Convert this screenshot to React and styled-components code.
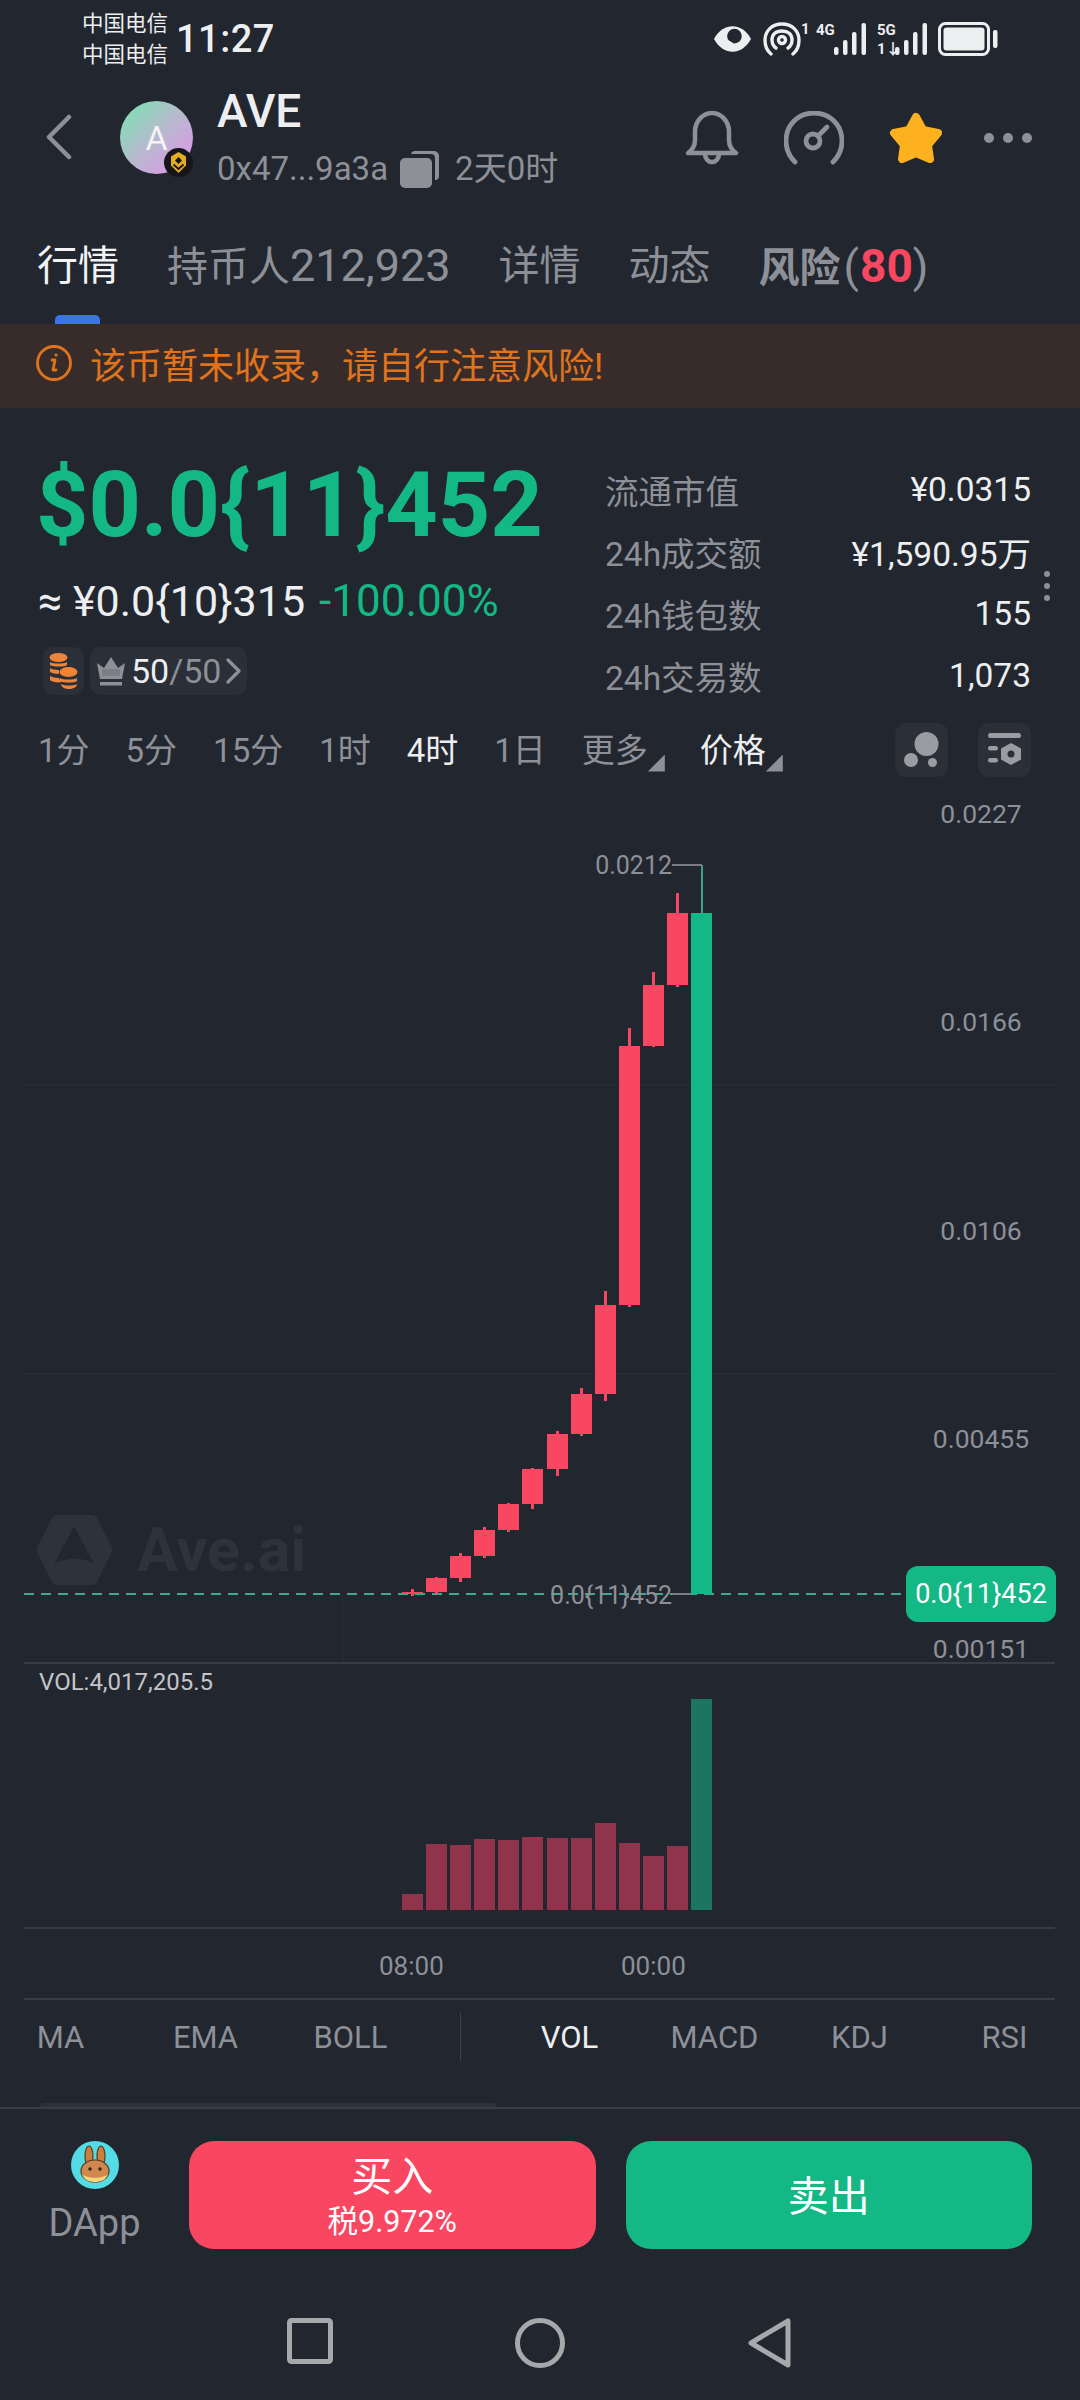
import React from 'react'
import styled, { createGlobalStyle } from 'styled-components'

const BG = '#22262e'
const GREEN = '#14b885'
const RED = '#f94661'
const GRAY = '#8d9097'
const WHITE = '#eceef0'
const CHIP = '#2a2f38'
const RULE = '#383c44'

const GlobalStyle = createGlobalStyle`
  html, body {
    margin: 0;
    padding: 0;
    background: ${BG};
  }
  body {
    font-family: Roboto, "Noto Sans CJK SC", sans-serif;
    color: ${WHITE};
  }
  * {
    box-sizing: border-box;
  }
`

const Page = styled.div`
  width: 1080px;
  height: 2400px;
  overflow: hidden;
  background: ${BG};
`

const IconSlot = styled.span`
  display: flex;
  flex: none;
  margin-left: ${({ $ml }) => $ml || 0}px;
  margin-right: ${({ $mr }) => $mr || 0}px;
`

/* status bar */
const StatusBar = styled.div`
  height: 76px;
  padding: 2px 82px 0 82px;
  display: flex;
  align-items: center;
`
const Carriers = styled.div`
  display: flex;
  flex-direction: column;
  font-size: 21.500px;
  line-height: 31px;
  width: 94px;
`
const Clock = styled.div`
  font-size: 38px;
  font-weight: 500;
  line-height: 44px;
  letter-spacing: 0.500px;
`
const StatusIcons = styled.div`
  margin-left: auto;
  display: flex;
  align-items: center;
`
const NetWrap = styled.div`
  position: relative;
  width: ${({ $w }) => $w}px;
  height: 34px;
  margin-left: ${({ $ml }) => $ml || 0}px;
  font-size: 15px;
  font-weight: 700;
  line-height: 15px;
`
const NetText = styled.span`
  position: absolute;
  left: ${({ $left }) => $left || 0}px;
  top: ${({ $top }) => $top || 0}px;
`

/* header */
const Header = styled.div`
  height: 124px;
  padding: 0 48px 0 46px;
  display: flex;
  align-items: flex-start;
`
const BackButton = styled.div`
  width: 74px;
  padding-top: 38px;
  display: flex;
`
const Avatar = styled.div`
  position: relative;
  width: 73px;
  height: 73px;
  margin-top: 25px;
  border-radius: 50%;
  background: linear-gradient(135deg, #74e6ac 0%, #b7b9cf 50%, #e790ec 100%);
  display: flex;
  align-items: center;
  justify-content: center;
  font-size: 34px;
  color: #f4f4f6;
`
const ChainBadge = styled.div`
  position: absolute;
  right: 0;
  bottom: 0;
  width: 29px;
  height: 29px;
`
const TokenInfo = styled.div`
  margin-left: 24px;
  display: flex;
  flex-direction: column;
`
const TokenName = styled.div`
  font-size: 46px;
  font-weight: 500;
  line-height: 56px;
  margin-top: 7px;
`
const TokenMeta = styled.div`
  display: flex;
  align-items: center;
  font-size: 33px;
  line-height: 44px;
  margin-top: 8px;
  color: ${GRAY};
`
const HeaderIcons = styled.div`
  margin-left: auto;
  padding-top: 35px;
  display: flex;
  align-items: center;
`

/* tabs */
const Tabs = styled.div`
  height: 124px;
  padding: 38px 0 0 37px;
  display: flex;
  gap: 48px;
  align-items: flex-start;
`
const Tab = styled.div`
  position: relative;
  font-size: 41px;
  line-height: 56px;
  color: ${({ $active }) => ($active ? '#f2f3f5' : GRAY)};
  font-weight: ${({ $strong }) => ($strong ? 700 : 400)};
  white-space: nowrap;

  ${({ $active }) =>
    $active &&
    `&:after {
      content: '';
      position: absolute;
      left: 18px;
      top: 77px;
      width: 45px;
      height: 9px;
      border-radius: 5px 5px 0 0;
      background: #3b74ea;
    }`}
`
const TabNumber = styled.span`
  font-size: 45px;
  font-weight: 400;
`
const RiskParen = styled.span`
  font-size: 45px;
  font-weight: 400;
  margin: 0 1px 0 3px;
`
const RiskScore = styled.span`
  font-size: 46px;
  color: ${RED};
  font-weight: 700;
`

const Banner = styled.div`
  height: 84px;
  padding: 0 0 7px 36px;
  background: #382c2b;
  display: flex;
  align-items: center;
  gap: 18px;
  font-size: 36px;
  color: #e0741c;
`

/* price + stats */
const Market = styled.div`
  height: 308px;
  position: relative;
  padding: 50px 49px 0 36px;
  display: flex;
  justify-content: space-between;
`
const PriceCol = styled.div`
  display: flex;
  flex-direction: column;
`
const Price = styled.div`
  font-size: 91.500px;
  font-weight: 700;
  line-height: 86px;
  margin-top: 4px;
  color: ${GREEN};
  white-space: nowrap;
`
const Quote = styled.div`
  margin: 28px 0 0 2px;
  font-size: 43px;
  line-height: 50px;
  white-space: nowrap;
`
const Change = styled.span`
  color: ${GREEN};
  margin-left: 14px;
  font-size: 44px;
`
const ChipRow = styled.div`
  margin-top: 21px;
  margin-left: 7px;
  display: flex;
  gap: 6px;
`
const Chip = styled.div`
  height: 48px;
  padding: 0 6px;
  border-radius: 10px;
  background: ${CHIP};
  display: flex;
  align-items: center;
  gap: 5px;
  font-size: 34px;
  line-height: 48px;
`
const ChipMuted = styled.span`
  color: ${GRAY};
`
const Stats = styled.div`
  width: 426px;
  display: flex;
  flex-direction: column;
`
const StatRow = styled.div`
  height: 62px;
  display: flex;
  justify-content: space-between;
  align-items: center;
  font-size: 33.500px;
`
const StatLabel = styled.span`
  color: ${GRAY};
`
const MoreDots = styled.div`
  position: absolute;
  right: 30px;
  top: 163px;
  display: flex;
  flex-direction: column;
  gap: 6px;
`
const MoreDot = styled.span`
  width: 6px;
  height: 6px;
  border-radius: 50%;
  background: ${GRAY};
`

/* interval bar */
const TimeBar = styled.div`
  height: 68px;
  padding: 0 49px 0 38px;
  display: flex;
  align-items: center;
  gap: 36px;
  font-size: 33px;
  color: ${GRAY};
`
const Interval = styled.span`
  color: ${({ $active }) => ($active ? WHITE : GRAY)};
  white-space: nowrap;
  margin-top: -5px;
`
const Drop = styled.span`
  display: inline-flex;
  align-items: flex-end;
  height: 48px;
  margin: -5px -1px 0 0;
  color: ${({ $active }) => ($active ? WHITE : GRAY)};
  white-space: nowrap;

  &:after {
    content: '';
    width: 17px;
    height: 17px;
    margin-bottom: 0;
    background: ${GRAY};
    clip-path: polygon(100% 0, 100% 100%, 0 100%);
  }
`
const ToolGroup = styled.div`
  margin-left: auto;
  display: flex;
  gap: 30px;
`
const ToolButton = styled.div`
  width: 53px;
  height: 54px;
  border-radius: 11px;
  background: ${CHIP};
  display: flex;
  align-items: center;
  justify-content: center;
`

/* chart */
const PricePane = styled.div`
  position: relative;
  height: 878px;
`
const ChartSvg = styled.svg`
  display: block;
`
const AxisLabel = styled.div`
  position: absolute;
  left: 906px;
  width: 150px;
  top: ${({ $y }) => $y}px;
  transform: translateY(-50%);
  text-align: center;
  font-size: 26.500px;
  color: ${GRAY};
`
const PriceTag = styled.div`
  position: absolute;
  left: 906px;
  top: 782px;
  width: 150px;
  height: 56px;
  border-radius: 12px;
  background: ${GREEN};
  display: flex;
  align-items: center;
  justify-content: center;
  color: #fff;
  font-size: 27px;
`
const PointLabel = styled.div`
  position: absolute;
  right: ${({ $right }) => $right}px;
  top: ${({ $y }) => $y}px;
  transform: translateY(-50%);
  font-size: ${({ $size }) => $size}px;
  color: ${GRAY};
  white-space: nowrap;
`
const Watermark = styled.div`
  position: absolute;
  left: 36px;
  top: 730px;
  display: flex;
  align-items: center;
  gap: 24px;
  color: #2d323b;
  font-size: 61px;
  font-weight: 700;
`
const Rule = styled.div`
  height: 2px;
  margin: 0 25px 0 24px;
  background: ${RULE};
`
const VolumePane = styled.div`
  position: relative;
  height: 263px;
`
const VolumeLabel = styled.div`
  position: absolute;
  left: 39px;
  top: 4px;
  font-size: 24px;
  line-height: 28px;
  color: #c3c5c9;
`
const TimeAxis = styled.div`
  position: relative;
  height: 69px;
`
const TimeLabel = styled.span`
  position: absolute;
  left: ${({ $x }) => $x}px;
  top: 21px;
  font-size: 26px;
  line-height: 32px;
  color: ${GRAY};
`

/* indicators */
const Indicators = styled.div`
  position: relative;
  height: 107px;
  margin-left: -12px;
  display: grid;
  grid-template-columns: 145px 145px 145px 74px 145px 145px 145px 145px;
  grid-template-rows: 74px;
  align-items: center;
  justify-items: center;
  font-size: 31px;
  color: ${GRAY};
`
const Indicator = styled.span`
  color: ${({ $active }) => ($active ? WHITE : GRAY)};
`
const IndicatorSplit = styled.span`
  width: 1px;
  height: 48px;
  background: #3d4149;
`
const Handle = styled.div`
  position: absolute;
  left: 52px;
  bottom: 0;
  width: 457px;
  height: 4px;
  border-radius: 4px 4px 0 0;
  background: #2d3139;
`
const FullRule = styled.div`
  height: 2px;
  background: ${RULE};
`

/* bottom actions */
const ActionBar = styled.div`
  height: 181px;
  padding: 32px 48px 0 47px;
  display: flex;
  align-items: flex-start;
`
const DApp = styled.div`
  width: 95px;
  margin-right: 47px;
  display: flex;
  flex-direction: column;
  align-items: center;
  font-size: 38px;
  line-height: 48px;
  color: ${GRAY};
`
const DAppIcon = styled.div`
  display: flex;
  margin-bottom: 10px;
`
const TradeButton = styled.div`
  flex: 1;
  height: 108px;
  border-radius: 25px;
  background: ${({ $sell }) => ($sell ? GREEN : RED)};
  margin-left: ${({ $sell }) => ($sell ? 30 : 0)}px;
  padding-top: ${({ $sell }) => ($sell ? 4 : 2)}px;
  color: #fff;
  display: flex;
  flex-direction: column;
  align-items: center;
  justify-content: center;
`
const TradeTitle = styled.div`
  font-size: 41px;
  line-height: 52px;
`
const TradeSub = styled.div`
  font-size: 30.500px;
  line-height: 38px;
`
const NavBar = styled.div`
  padding-top: 28px;
  display: grid;
  grid-template-columns: repeat(3, 230px);
  justify-content: center;
  justify-items: center;
`

/* drawings */
const EyeIcon = () => (
  <svg width="39" height="28" viewBox="0 0 40 28">
    <path d="M1 14C6 5 13 1 20 1s14 4 19 13c-5 9-12 13-19 13S6 23 1 14Z" fill="#eceef0" />
    <circle cx="22" cy="11" r="7.500" fill="#22262e" />
    <path d="M15 15c3 1 6 3 7 7-3 1-6-1-8-3Z" fill="#eceef0" />
  </svg>
)

const HotspotIcon = () => (
  <svg width="38" height="34" viewBox="0 0 38 34" fill="none" stroke="#eceef0" strokeWidth="3.400" strokeLinecap="round">
    <path d="M8 32C3 28 2 23 2 18 2 9 9 2 19 2s17 7 17 16c0 5-1 10-6 14" />
    <path d="M13 26c-3-2-4-5-4-8 0-6 4-9 10-9s10 3 10 9c0 3-1 6-4 8" />
    <circle cx="19" cy="18" r="3.500" />
  </svg>
)

const SignalBars = () => (
  <svg width="33" height="32" viewBox="0 0 33 32" fill="#eceef0">
    <rect x="0" y="24" width="4.500" height="8" rx="2" />
    <rect x="9" y="17" width="4.500" height="15" rx="2" />
    <rect x="18" y="9" width="4.500" height="23" rx="2" />
    <rect x="27.500" y="0" width="4.500" height="32" rx="2" />
  </svg>
)

const BatteryIcon = () => (
  <svg width="60" height="34" viewBox="0 0 60 34">
    <rect x="1.500" y="1.500" width="49" height="31" rx="6" fill="none" stroke="#eceef0" strokeWidth="3" />
    <rect x="5.500" y="5.500" width="41" height="23" rx="3" fill="#eceef0" />
    <rect x="55" y="8" width="4.500" height="18" rx="2" fill="#eceef0" />
  </svg>
)

const BackIcon = () => (
  <svg width="26" height="46" viewBox="0 0 26 46" fill="none" stroke="#8d9097" strokeWidth="4.500" strokeLinecap="round" strokeLinejoin="round">
    <path d="M23 3 3 23l20 20" />
  </svg>
)

const BnbBadge = () => (
  <svg width="29" height="29" viewBox="0 0 29 29">
    <circle cx="14.500" cy="14.500" r="14.500" fill="#15151a" />
    <path d="M14.500 4 22 8.500v9L14.500 25 7 17.500v-9Z" fill="#e5ad1d" />
    <path d="M14.500 9 18 12.500 14.500 16 11 12.500Z" fill="#15151a" />
    <path d="M9.500 16.500 14.500 21l5-4.500" fill="none" stroke="#15151a" strokeWidth="1.800" />
  </svg>
)

const CopyIcon = () => (
  <svg width="40" height="38" viewBox="0 0 40 38">
    <path d="M14 1h20a5 5 0 0 1 5 5v20a4 4 0 0 1-4 4V8a4 4 0 0 0-4-4H11a4 4 0 0 1 3-3Z" fill="#8d9097" />
    <rect x="0" y="8" width="32" height="30" rx="5" fill="#8d9097" />
  </svg>
)

const BellIcon = () => (
  <svg width="54" height="54" viewBox="0 0 54 54" fill="none" stroke="#8d9097" strokeWidth="4.500" strokeLinecap="round" strokeLinejoin="round">
    <path d="M3 42c3-2 7-6 7-13v-8C10 10 18 2 27 2s17 8 17 19v8c0 7 4 11 7 13Z" />
    <path d="M20 43a7 8 0 0 0 14 0" />
  </svg>
)

const GaugeIcon = () => (
  <svg width="60" height="54" viewBox="0 0 60 54" fill="none" stroke="#8d9097" strokeWidth="4.800" strokeLinecap="round">
    <path d="M11 51C5 45 2 38 2 30 2 14 14 2 30 2s28 12 28 28c0 8-3 15-9 21" />
    <circle cx="29" cy="30" r="7" />
    <path d="M34 25 43 16" />
  </svg>
)

const StarIcon = () => (
  <svg width="54" height="52" viewBox="0 0 54 52">
    <path
      d="M27 5 34 18 49 21 39 33 41 47 27 41 13 47 15 33 5 21 20 18Z"
      fill="#fdb11e"
      stroke="#fdb11e"
      strokeWidth="8"
      strokeLinejoin="round"
    />
  </svg>
)

const DotsIcon = () => (
  <svg width="48" height="12" viewBox="0 0 48 12" fill="#8d9097">
    <circle cx="5" cy="6" r="5" />
    <circle cx="24" cy="6" r="5" />
    <circle cx="43" cy="6" r="5" />
  </svg>
)

const InfoIcon = () => (
  <svg width="36" height="36" viewBox="0 0 36 36" fill="none" stroke="#e0741c" strokeWidth="2.800">
    <circle cx="18" cy="18" r="16.500" />
    <path d="M16 15h3l-2 10h3" strokeLinecap="round" strokeLinejoin="round" />
    <circle cx="20" cy="10" r="1.600" fill="#e0741c" stroke="none" />
  </svg>
)

const CoinsIcon = () => (
  <svg width="29" height="36" viewBox="0 0 29 36">
    <g fill="#ef8438">
      <ellipse cx="9.500" cy="4.500" rx="9" ry="4.500" />
      <path d="M1 9c3 2 14 2 17 0v3c-2 2-14 2-17 0Z" />
      <path d="M1 15c3 2 9 2 9 2v4c-4 0-7-1-9-2Z" />
      <path d="M1 23c2 1 6 2 9 2 1 2 2 3 3 4-5 1-10 0-12-2Z" />
      <ellipse cx="19.500" cy="19" rx="9" ry="5" />
      <path d="M11 25c3 2 14 2 17 0v3c-2 2-14 2-17 0Z" />
      <path d="M12 31c4 2 12 2 16 0 0 3-4 5-8 5s-8-2-8-5Z" />
    </g>
  </svg>
)

const CrownIcon = () => (
  <svg width="30" height="30" viewBox="0 0 30 30">
    <path d="M1 7 8 12 15 1 22 12 29 7 26 23H4Z" fill="#8d9097" />
    <rect x="4" y="26" width="22" height="3.500" fill="#8d9097" />
    <path d="M6 13h18v7H6Z" fill="#7b7e85" />
  </svg>
)

const ChevronIcon = () => (
  <svg width="15" height="26" viewBox="0 0 15 26" fill="none" stroke="#8d9097" strokeWidth="3.200" strokeLinecap="round" strokeLinejoin="round">
    <path d="M2 2l11 11L2 24" />
  </svg>
)

const BubbleIcon = () => (
  <svg width="36" height="36" viewBox="0 0 36 36" fill="#9a9ca2">
    <circle cx="22.500" cy="12" r="12" />
    <circle cx="7" cy="28" r="7" />
    <circle cx="28.500" cy="30.500" r="4.500" />
  </svg>
)

const FilterIcon = () => (
  <svg width="34" height="34" viewBox="0 0 34 34" fill="#9a9ca2">
    <rect x="0" y="0" width="33" height="5" rx="2.500" />
    <rect x="0" y="13" width="10" height="4.500" rx="2.200" />
    <rect x="0" y="25" width="10" height="4.500" rx="2.200" />
    <path fillRule="evenodd" d="M23 10l10 5.500v11L23 32l-10-5.500v-11ZM23 17.500a3.500 3.500 0 1 0 0 7 3.500 3.500 0 0 0 0-7Z" />
  </svg>
)

const AveLogo = () => (
  <svg width="77" height="72" viewBox="0 0 77 72">
    <path d="M20 1h37a5 5 0 0 1 4 3l15 29a5 5 0 0 1 0 5L61 68a5 5 0 0 1-4 3H20a5 5 0 0 1-4-3L1 38a5 5 0 0 1 0-5L16 4a5 5 0 0 1 4-3Z" fill="#2d323b" />
    <path d="M38 12 58 50C48 43 30 43 18 50Z" fill="#22262e" />
  </svg>
)

const BunnyIcon = () => (
  <svg width="48" height="48" viewBox="0 0 48 48">
    <circle cx="24" cy="24" r="24" fill="#53dbe6" />
    <ellipse cx="18" cy="15" rx="4" ry="10" fill="#c9803f" stroke="#5e3a1e" strokeWidth="1.200" />
    <ellipse cx="30" cy="15" rx="4" ry="10" fill="#c9803f" stroke="#5e3a1e" strokeWidth="1.200" />
    <ellipse cx="24" cy="30" rx="14" ry="11" fill="#d1884f" stroke="#5e3a1e" strokeWidth="1.200" />
    <path d="M11 33c5 5 21 5 26 0-2 6-7 8-13 8s-11-2-13-8Z" fill="#f3d77f" />
    <circle cx="19" cy="28" r="1.800" fill="#3a2412" />
    <circle cx="29" cy="28" r="1.800" fill="#3a2412" />
  </svg>
)

/* candles: x left, body top/bottom, wick top/bottom (page coordinates) */
const candles = [
  { x: 402, top: 1592, bottom: 1594, high: 1589, low: 1596 },
  { x: 426, top: 1578, bottom: 1592, high: 1577, low: 1594 },
  { x: 450, top: 1556, bottom: 1578, high: 1553, low: 1582 },
  { x: 474, top: 1530, bottom: 1556, high: 1527, low: 1558 },
  { x: 498, top: 1504, bottom: 1530, high: 1503, low: 1532 },
  { x: 522, top: 1469, bottom: 1504, high: 1468, low: 1509 },
  { x: 547, top: 1434, bottom: 1469, high: 1431, low: 1476 },
  { x: 571, top: 1394, bottom: 1434, high: 1388, low: 1436 },
  { x: 595, top: 1305, bottom: 1394, high: 1291, low: 1401 },
  { x: 619, top: 1046, bottom: 1305, high: 1028, low: 1307 },
  { x: 643, top: 985, bottom: 1046, high: 972, low: 1047 },
  { x: 667, top: 913, bottom: 985, high: 893, low: 987 },
]

const volumes = [1894, 1844, 1845, 1839, 1840, 1837, 1838, 1838, 1823, 1843, 1856, 1846]

const axisLabels = [
  ['0.0227', 813],
  ['0.0166', 1021],
  ['0.0106', 1230],
  ['0.00455', 1438],
  ['0.00151', 1648],
]

const stats = [
  ['流通市值', '¥0.0315'],
  ['24h成交额', '¥1,590.95万'],
  ['24h钱包数', '155'],
  ['24h交易数', '1,073'],
]

const PANE_TOP = 784

const PriceChart = () => (
  <ChartSvg width="1080" height="878" viewBox={`0 ${PANE_TOP} 1080 878`}>
    <g stroke="#282c34" strokeWidth="1.500">
      <path d="M24 1085H1056" />
      <path d="M24 1374H1056" />
      <path d="M343 1597V1662" />
    </g>
    <path d="M24 1594H906" stroke="#45a593" strokeWidth="2" strokeDasharray="10 7" />
    {candles.map(c => (
      <g key={c.x} fill={RED}>
        <rect x={c.x + 9} y={c.high} width="3" height={c.low - c.high} />
        <rect x={c.x} y={c.top} width="21" height={c.bottom - c.top} />
      </g>
    ))}
    <path d="M702 865V913" fill="none" stroke="#3fa08c" strokeWidth="2" />
    <path d="M672 865H702" fill="none" stroke="#7a7d84" strokeWidth="2" />
    <rect x="691" y="913" width="21" height="681" fill={GREEN} />
    <path d="M672 1594H691" stroke="#7a7d84" strokeWidth="2" />
  </ChartSvg>
)

const VolumeChart = () => (
  <ChartSvg width="1080" height="263" viewBox="0 1664 1080 263">
    {volumes.map((top, i) => (
      <rect key={i} x={candles[i].x} y={top} width="21" height={1910 - top} fill="#8f344a" />
    ))}
    <rect x="691" y="1699" width="21" height="211" fill="#1b7560" />
  </ChartSvg>
)

export default function App() {
  return (
    <Page>
      <GlobalStyle />
      <StatusBar>
        <Carriers>
          <span>中国电信</span>
          <span>中国电信</span>
        </Carriers>
        <Clock>11:27</Clock>
        <StatusIcons>
          <EyeIcon />
          <NetWrap $w={46} $ml={11}>
            <HotspotIcon />
            <NetText $left={38}>1</NetText>
          </NetWrap>
          <NetWrap $w={18} $ml={7}>
            <NetText $top={1}>4G</NetText>
          </NetWrap>
          <SignalBars />
          <NetWrap $w={18} $ml={10}>
            <NetText $top={1}>5G</NetText>
            <NetText $top={20}>1↓</NetText>
          </NetWrap>
          <SignalBars />
          <IconSlot $ml={10}>
            <BatteryIcon />
          </IconSlot>
        </StatusIcons>
      </StatusBar>

      <Header>
        <BackButton>
          <BackIcon />
        </BackButton>
        <Avatar>
          A
          <ChainBadge>
            <BnbBadge />
          </ChainBadge>
        </Avatar>
        <TokenInfo>
          <TokenName>AVE</TokenName>
          <TokenMeta>
            0x47...9a3a
            <IconSlot $ml={12} $mr={15}>
              <CopyIcon />
            </IconSlot>
            2天0时
          </TokenMeta>
        </TokenInfo>
        <HeaderIcons>
          <BellIcon />
          <IconSlot $ml={45}>
            <GaugeIcon />
          </IconSlot>
          <IconSlot $ml={45}>
            <StarIcon />
          </IconSlot>
          <IconSlot $ml={41}>
            <DotsIcon />
          </IconSlot>
        </HeaderIcons>
      </Header>

      <Tabs>
        <Tab $active>行情</Tab>
        <Tab>
          持币人<TabNumber>212,923</TabNumber>
        </Tab>
        <Tab>详情</Tab>
        <Tab>动态</Tab>
        <Tab $strong>
          风险
          <RiskParen>(</RiskParen>
          <RiskScore>80</RiskScore>
          <TabNumber>)</TabNumber>
        </Tab>
      </Tabs>

      <Banner>
        <InfoIcon />
        该币暂未收录，请自行注意风险!
      </Banner>

      <Market>
        <PriceCol>
          <Price>$0.0{'{11}'}452</Price>
          <Quote>
            ≈ ¥0.0{'{10}'}315
            <Change>-100.00%</Change>
          </Quote>
          <ChipRow>
            <Chip>
              <CoinsIcon />
            </Chip>
            <Chip>
              <CrownIcon />
              <span>
                50<ChipMuted>/50</ChipMuted>
              </span>
              <ChevronIcon />
            </Chip>
          </ChipRow>
        </PriceCol>
        <Stats>
          {stats.map(([label, value]) => (
            <StatRow key={label}>
              <StatLabel>{label}</StatLabel>
              <span>{value}</span>
            </StatRow>
          ))}
        </Stats>
        <MoreDots>
          <MoreDot />
          <MoreDot />
          <MoreDot />
        </MoreDots>
      </Market>

      <TimeBar>
        <Interval>1分</Interval>
        <Interval>5分</Interval>
        <Interval>15分</Interval>
        <Interval>1时</Interval>
        <Interval $active>4时</Interval>
        <Interval>1日</Interval>
        <Drop>更多</Drop>
        <Drop $active>价格</Drop>
        <ToolGroup>
          <ToolButton>
            <BubbleIcon />
          </ToolButton>
          <ToolButton>
            <FilterIcon />
          </ToolButton>
        </ToolGroup>
      </TimeBar>

      <PricePane>
        <PriceChart />
        <Watermark>
          <AveLogo />
          Ave.ai
        </Watermark>
        {axisLabels.map(([text, y]) => (
          <AxisLabel key={text} $y={y - PANE_TOP}>
            {text}
          </AxisLabel>
        ))}
        <PointLabel $right={408} $y={865 - PANE_TOP} $size={25}>
          0.0212
        </PointLabel>
        <PointLabel $right={408} $y={1595 - PANE_TOP} $size={25}>
          0.0{'{11}'}452
        </PointLabel>
        <PriceTag>0.0{'{11}'}452</PriceTag>
      </PricePane>
      <Rule />
      <VolumePane>
        <VolumeChart />
        <VolumeLabel>VOL:4,017,205.5</VolumeLabel>
      </VolumePane>
      <Rule />
      <TimeAxis>
        <TimeLabel $x={379}>08:00</TimeLabel>
        <TimeLabel $x={621}>00:00</TimeLabel>
      </TimeAxis>
      <Rule />

      <Indicators>
        <Indicator>MA</Indicator>
        <Indicator>EMA</Indicator>
        <Indicator>BOLL</Indicator>
        <IndicatorSplit />
        <Indicator $active>VOL</Indicator>
        <Indicator>MACD</Indicator>
        <Indicator>KDJ</Indicator>
        <Indicator>RSI</Indicator>
        <Handle />
      </Indicators>
      <FullRule />

      <ActionBar>
        <DApp>
          <DAppIcon>
            <BunnyIcon />
          </DAppIcon>
          DApp
        </DApp>
        <TradeButton>
          <TradeTitle>买入</TradeTitle>
          <TradeSub>税9.972%</TradeSub>
        </TradeButton>
        <TradeButton $sell>
          <TradeTitle>卖出</TradeTitle>
        </TradeButton>
      </ActionBar>

      <NavBar>
        <svg width="46" height="46" viewBox="0 0 46 46">
          <rect x="2.500" y="2.500" width="41" height="41" rx="2" fill="none" stroke="#a6a8ac" strokeWidth="5" />
        </svg>
        <svg width="50" height="50" viewBox="0 0 50 50">
          <circle cx="25" cy="25" r="22.500" fill="none" stroke="#a6a8ac" strokeWidth="5" />
        </svg>
        <svg width="44" height="50" viewBox="0 0 44 50">
          <path d="M40 3V47L3 25Z" fill="none" stroke="#a6a8ac" strokeWidth="5" strokeLinejoin="round" />
        </svg>
      </NavBar>
    </Page>
  )
}
